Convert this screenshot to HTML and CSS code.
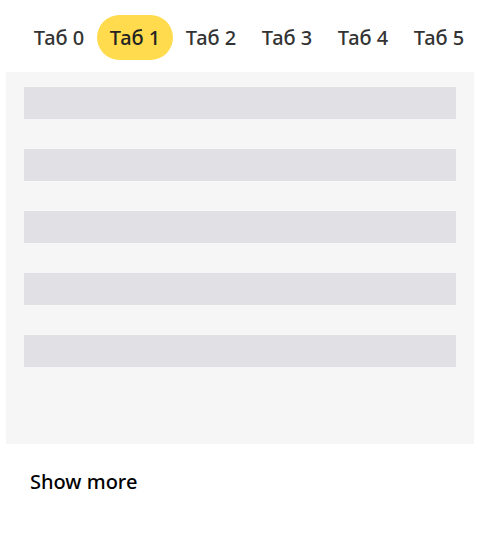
FILE: index.html
```html
<!DOCTYPE html>
<html>
<head>
<meta charset="utf-8">
<link rel="stylesheet" href="styles.css">
</head>
<body>
<nav class="tabs">
  <div class="tab">Таб 0</div>
  <div class="tab active">Таб 1</div>
  <div class="tab">Таб 2</div>
  <div class="tab">Таб 3</div>
  <div class="tab">Таб 4</div>
  <div class="tab">Таб 5</div>
</nav>
<section class="panel">
  <div class="bar"></div>
  <div class="bar"></div>
  <div class="bar"></div>
  <div class="bar"></div>
  <div class="bar"></div>
</section>
<div class="more">Show more</div>
</body>
</html>
```
FILE: styles.css
```css
html, body { margin: 0; padding: 0; background: #fff; }
body { font-family: "Noto Sans", "Open Sans", sans-serif; width: 480px; height: 533px; overflow: hidden; }
.tabs { display: flex; padding: 15px 0 0 21px; height: 72px; box-sizing: border-box; white-space: nowrap; }
.tab { width: 76px; height: 45px; flex: none; display: flex; align-items: center; justify-content: center; font-size: 20px; font-weight: 500; color: #333; border-radius: 23px; box-sizing: border-box; }
.tab.active { background: #ffdb4d; color: #222; }
.panel { margin: 0 6px; height: 372px; background: #f6f6f6; padding: 15px 18px 0; box-sizing: border-box; display: flex; flex-direction: column; gap: 30px; }
.bar { height: 32px; background: #e0e0e5; }
.more { padding: 24px 0 0 30px; font-size: 20px; font-weight: 500; color: #000; line-height: 28px; }
```
